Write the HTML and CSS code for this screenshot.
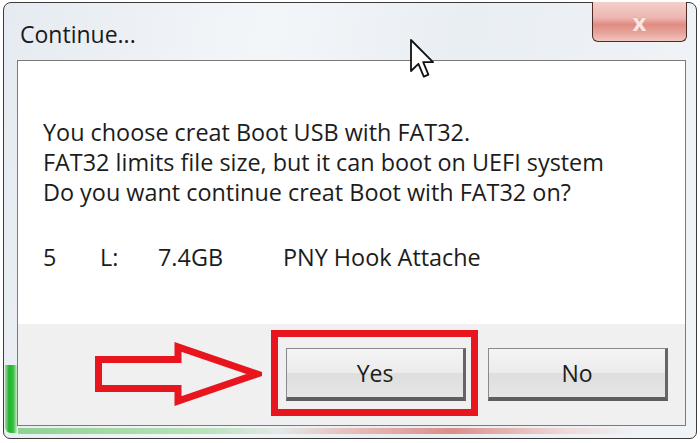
FILE: index.html
```html
<!DOCTYPE html>
<html lang="en">
<head>
    <meta charset="UTF-8">
    <meta name="viewport" content="width=device-width, initial-scale=1.0">
    <title>Continue...</title>
    <link rel="stylesheet" href="styles.css">
</head>
<body>
    <div class="window">
        <div class="titlebar">
            <span class="title">Continue...</span>
            <button class="close">x</button>
        </div>
        <div class="client">
            <div class="message">
                <p>You choose creat Boot USB with FAT32.</p>
                <p>FAT32 limits file size, but it can boot on UEFI system</p>
                <p>Do you want continue creat Boot with FAT32 on?</p>
                <div class="drive">
                    <span class="col-num">5</span>
                    <span class="col-letter">L:</span>
                    <span class="col-size">7.4GB</span>
                    <span>PNY Hook Attache</span>
                </div>
            </div>
            <div class="actions">
                <!-- annotation arrow -->
                <svg class="arrow" width="170" height="70" viewBox="0 0 170 70">
                    <polygon points="6.5,19.5 86,19.5 86,7 165,34 86,61 86,48.5 6.5,48.5"
                             fill="none" stroke="#e8141e" stroke-width="7" stroke-linejoin="miter"/>
                </svg>
                <span class="highlight"><button class="btn">Yes</button></span>
                <button class="btn btn-no">No</button>
            </div>
        </div>
        <svg class="cursor" width="25" height="40" viewBox="0 0 12.5 20">
            <polygon points="0.5,0.5 0.5,16 4.2,12.4 6.9,18.8 9.2,17.8 6.6,11.6 11.5,11.6"
                     fill="#fff" stroke="#111" stroke-width="0.9" stroke-linejoin="round"/>
        </svg>
    </div>
</body>
</html>
```

FILE: styles.css
```css
* {
    box-sizing: border-box;
}
body {
    margin: 0;
    background: #fff;
    font-family: "Open Sans", "Noto Sans", sans-serif;
    color: #1c1c1c;
}
.window {
    position: relative;
    width: 694px;
    height: 437px;
    margin: 2px 3px 0 3px;
    border: 1px solid #3b3b3b;
    border-radius: 8px 8px 7px 7px;
    background: linear-gradient(100deg, #e6ebf1 0%, #f3f6f9 35%, #e9eef3 60%, #f1f4f7 100%);
}
/* aero glass reflections */
.window::before {
    content: "";
    position: absolute;
    left: 1px;
    top: 362px;
    width: 12px;
    height: 68px;
    background: linear-gradient(90deg, #9ad89a, #1fb52a 35%, #3cbf45 70%, #c9e9c9);
    border-radius: 0 0 0 6px;
}
.window::after {
    content: "";
    position: absolute;
    left: 14px;
    top: 425px;
    width: 620px;
    height: 6px;
    background: linear-gradient(90deg, #8ed291 0%, #b9e2ba 30%, #e3e9e6 42%, #e6b9b6 55%, #d98f8a 70%, #eed9d8 88%, rgba(240,240,240,0) 100%);
}
.titlebar {
    display: flex;
    justify-content: space-between;
    align-items: flex-start;
    height: 57px;
}
.title {
    padding: 17px 0 0 16px;
    font-size: 23px;
    line-height: 28px;
    color: #1a1a1a;
}
.close {
    width: 95px;
    height: 40px;
    margin: -1px 9px 0 0;
    border: 1px solid #4f2a26;
    border-top: none;
    border-radius: 0 0 6px 6px;
    background: linear-gradient(180deg, #f3d0cb 0%, #edb7b0 40%, #e08c82 58%, #e7a59c 80%, #f1c6c0 100%);
    color: #f8e6e3;
    font-family: "Open Sans", sans-serif;
    font-size: 24px;
    font-weight: bold;
    line-height: 30px;
    text-shadow: 0 0 2px #d9968e;
}
.client {
    margin: 0 10px 0 13px;
    height: 366px;
    border: 1px solid #7b7b7b;
    display: flex;
    flex-direction: column;
}
.message {
    background: #fff;
    height: 263px;
    padding: 56px 0 0 25px;
    font-size: 23.4px;
    line-height: 30px;
}
.message p {
    margin: 0;
}
.drive {
    display: flex;
    margin-top: 35px;
}
.col-num {
    width: 57px;
}
.col-letter {
    width: 58px;
}
.col-size {
    width: 125px;
}
.actions {
    flex: 1;
    display: flex;
    align-items: flex-start;
    padding-top: 6px;
    background: #f0f0f0;
}
.arrow {
    margin: 10px 0 0 74px;
    flex-shrink: 0;
}
.highlight {
    display: block;
    margin-left: 9px;
    padding: 11px 5px 8px 8px;
    border: 7px solid #e8141e;
}
.btn {
    display: block;
    width: 180px;
    height: 53px;
    border: 1px solid #8a8a8a;
    border-right: 3px solid #666;
    border-bottom: 4px solid #5e5e5e;
    background: linear-gradient(180deg, #f4f4f4 0%, #ececec 50%, #dedede 51%, #e6e6e6 100%);
    font-family: "Open Sans", sans-serif;
    font-size: 23px;
    color: #1c1c1c;
    padding: 0;
}
.btn-no {
    margin: 18px 0 0 10px;
}
.cursor {
    position: absolute;
    left: 406px;
    top: 36px;
}
```
